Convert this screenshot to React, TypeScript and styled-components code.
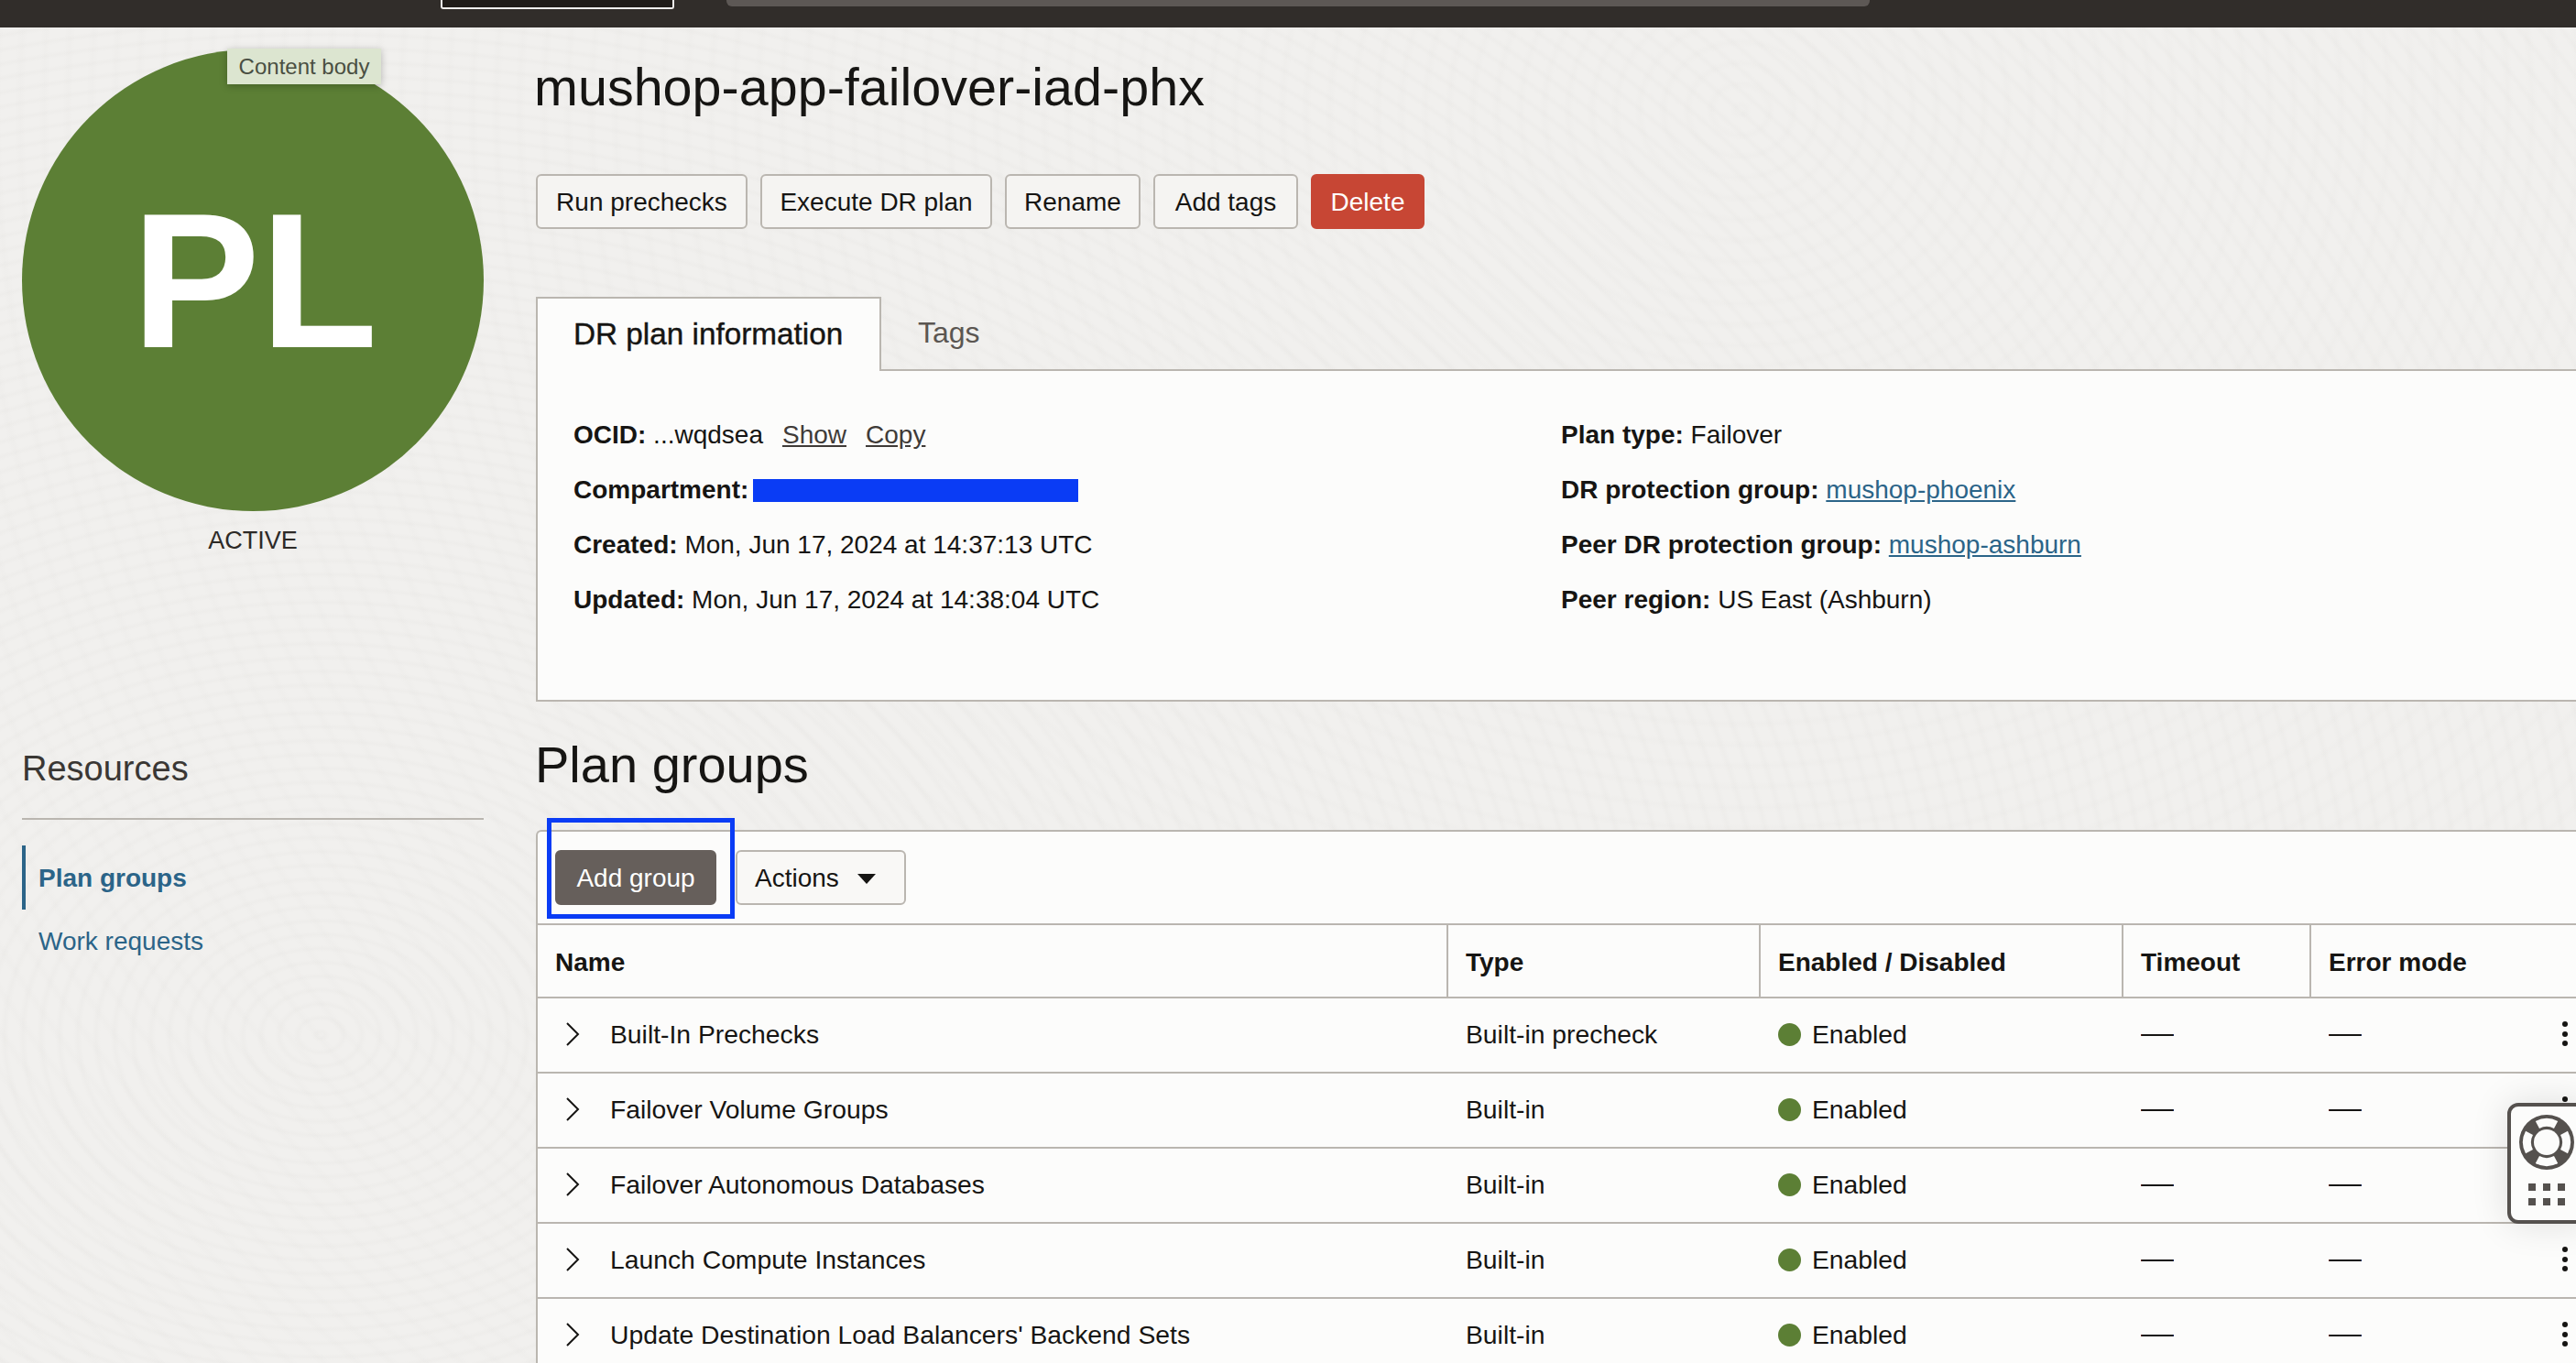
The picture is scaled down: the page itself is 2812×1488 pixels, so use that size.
import styled, { createGlobalStyle } from "styled-components"

const GlobalStyle = createGlobalStyle`
    html, body {
        margin: 0;
        padding: 0;
        width: 2812px;
        height: 1488px;
        overflow: hidden;
        font-family: "Liberation Sans", Arial, sans-serif;
        color: #161513;
    }
    * {
        box-sizing: border-box;
    }
`

const actions = [
    { label: "Run prechecks", width: 231 },
    { label: "Execute DR plan", width: 253 },
    { label: "Rename", width: 148 },
    { label: "Add tags", width: 158 },
]

const leftInfo = [
    { label: "Created:", value: "Mon, Jun 17, 2024 at 14:37:13 UTC" },
    { label: "Updated:", value: "Mon, Jun 17, 2024 at 14:38:04 UTC" },
]

const groups = [
    { name: "Built-In Prechecks", type: "Built-in precheck" },
    { name: "Failover Volume Groups", type: "Built-in" },
    { name: "Failover Autonomous Databases", type: "Built-in" },
    { name: "Launch Compute Instances", type: "Built-in" },
    { name: "Update Destination Load Balancers' Backend Sets", type: "Built-in" },
]

const Chevron = () => (
    <svg width="16" height="28" viewBox="0 0 16 28" fill="none">
        <path d="M2 2 L14 14 L2 26" stroke="#161513" strokeWidth="2" />
    </svg>
)

const Kebab = () => (
    <svg width="8" height="30" viewBox="0 0 8 30">
        <circle cx="4" cy="4" r="3" fill="#161513" />
        <circle cx="4" cy="15" r="3" fill="#161513" />
        <circle cx="4" cy="25" r="3" fill="#161513" />
    </svg>
)

const Lifebuoy = () => (
    <svg width="60" height="60" viewBox="-30 -30 60 60" fill="none">
        <circle r="30" fill="#55514e" />
        <path
            d="M-10.1 -19 A21.5 21.5 0 0 1 10.1 -19 M19 -10.1 A21.5 21.5 0 0 1 19 10.1 M10.1 19 A21.5 21.5 0 0 1 -10.1 19 M-19 10.1 A21.5 21.5 0 0 1 -19 -10.1"
            stroke="#fcfcfb"
            strokeWidth="9"
        />
        <circle r="14" fill="#fcfcfb" />
    </svg>
)

const App = () => {
    return (
        <Page>
            <GlobalStyle />
            <Header>
                <RegionBox />
                <SearchBox />
            </Header>
            <Body>
                <Sidebar>
                    <Badge>
                        PL
                        <Tooltip>Content body</Tooltip>
                    </Badge>
                    <BadgeStatus>ACTIVE</BadgeStatus>
                    <ResourcesTitle>Resources</ResourcesTitle>
                    <NavItem $active>Plan groups</NavItem>
                    <NavItem>Work requests</NavItem>
                </Sidebar>
                <Main>
                    <Title>mushop-app-failover-iad-phx</Title>
                    <ButtonRow>
                        {actions.map((action) => (
                            <Button key={action.label} $width={action.width}>
                                {action.label}
                            </Button>
                        ))}
                        <DangerButton>Delete</DangerButton>
                    </ButtonRow>
                    <TabRow>
                        <ActiveTab>DR plan information</ActiveTab>
                        <Tab>Tags</Tab>
                    </TabRow>
                    <InfoPanel>
                        <div>
                            <InfoRow>
                                <b>OCID:</b> ...wqdsea
                                <PlainLink>Show</PlainLink>
                                <PlainLink>Copy</PlainLink>
                            </InfoRow>
                            <InfoRow>
                                <b>Compartment:</b>
                                <Redaction />
                            </InfoRow>
                            {leftInfo.map((item) => (
                                <InfoRow key={item.label}>
                                    <b>{item.label}</b> {item.value}
                                </InfoRow>
                            ))}
                        </div>
                        <div>
                            <InfoRow>
                                <b>Plan type:</b> Failover
                            </InfoRow>
                            <InfoRow>
                                <b>DR protection group:</b> <BlueLink>mushop-phoenix</BlueLink>
                            </InfoRow>
                            <InfoRow>
                                <b>Peer DR protection group:</b> <BlueLink>mushop-ashburn</BlueLink>
                            </InfoRow>
                            <InfoRow>
                                <b>Peer region:</b> US East (Ashburn)
                            </InfoRow>
                        </div>
                    </InfoPanel>
                    <SectionTitle>Plan groups</SectionTitle>
                    <Toolbar>
                        <PrimaryButton>Add group</PrimaryButton>
                        <ActionsButton>
                            Actions
                            <Caret />
                        </ActionsButton>
                        <Highlight />
                    </Toolbar>
                    <Table>
                        <HeaderRow>
                            <HeaderCell>Name</HeaderCell>
                            <HeaderCell $divider>Type</HeaderCell>
                            <HeaderCell $divider>Enabled / Disabled</HeaderCell>
                            <HeaderCell $divider>Timeout</HeaderCell>
                            <HeaderCell $divider>Error mode</HeaderCell>
                        </HeaderRow>
                        {groups.map((group) => (
                            <Row key={group.name}>
                                <NameCell>
                                    <Chevron />
                                    {group.name}
                                </NameCell>
                                <Cell>{group.type}</Cell>
                                <Cell>
                                    <StatusDot />
                                    Enabled
                                </Cell>
                                <Cell>
                                    <Dash>—</Dash>
                                </Cell>
                                <LastCell>
                                    <Dash>—</Dash>
                                    <Kebab />
                                </LastCell>
                            </Row>
                        ))}
                    </Table>
                </Main>
            </Body>
            <HelpWidget>
                <Lifebuoy />
                <HelpGrid>
                    {[0, 1, 2, 3, 4, 5].map((i) => (
                        <HelpSquare key={i} />
                    ))}
                </HelpGrid>
            </HelpWidget>
        </Page>
    )
}

export default App

const Page = styled.div`
    position: relative;
    width: 2812px;
    height: 1488px;
    overflow: hidden;
    background-color: #f1f0ee;
    background-image:
        repeating-radial-gradient(ellipse 70% 100% at 350px 1130px, transparent 0, rgba(120, 115, 105, 0.022) 5px, transparent 10px, transparent 20px),
        repeating-radial-gradient(ellipse 60% 100% at 1900px 120px, transparent 0, rgba(120, 115, 105, 0.016) 6px, transparent 12px, transparent 26px);
`

const Header = styled.header`
    display: flex;
    align-items: flex-start;
    height: 30px;
    padding-left: 481px;
    gap: 57px;
    background: #312d2a;
`

const RegionBox = styled.div`
    width: 255px;
    height: 10px;
    background: #201c19;
    border: 2px solid #f1efed;
    border-top: none;
    border-radius: 0 0 3px 3px;
`

const SearchBox = styled.div`
    width: 1248px;
    height: 7px;
    background: #5d5855;
    border-radius: 0 0 6px 6px;
`

const Body = styled.div`
    display: flex;
    gap: 57px;
    padding-left: 24px;
`

const Sidebar = styled.aside`
    flex: 0 0 504px;
    padding-top: 24px;
`

const Badge = styled.div`
    position: relative;
    display: flex;
    align-items: center;
    justify-content: center;
    width: 504px;
    height: 504px;
    padding: 2px 0 0 4px;
    border-radius: 50%;
    background: #5c7f35;
    color: #fff;
    font-size: 210px;
    font-weight: 700;
`

const Tooltip = styled.div`
    position: absolute;
    left: 224px;
    top: -1px;
    width: 168px;
    height: 39px;
    display: flex;
    align-items: center;
    justify-content: center;
    background: #dce5d0;
    color: #4a4f42;
    font-size: 24px;
    font-weight: 400;
    box-shadow: 0 2px 8px rgba(0, 0, 0, 0.25);
`

const BadgeStatus = styled.div`
    margin-top: 16px;
    font-size: 27px;
    line-height: 32px;
    text-align: center;
    color: #2d2a27;
`

const ResourcesTitle = styled.h2`
    height: 78px;
    margin: 211px 0 28px;
    border-bottom: 2px solid #bab6b0;
    font-size: 38px;
    line-height: 44px;
    font-weight: 400;
    color: #3a3734;
`

const NavItem = styled.div<{ $active?: boolean }>`
    display: flex;
    align-items: center;
    height: ${(props) => (props.$active ? "70px" : "68px")};
    padding: 2px 0 0 ${(props) => (props.$active ? "14px" : "18px")};
    border-left: ${(props) => (props.$active ? "4px solid #2b6488" : "none")};
    color: #2b6488;
    font-size: 28px;
    font-weight: ${(props) => (props.$active ? 700 : 400)};
`

const Main = styled.main`
    flex: 1;
    min-width: 0;
`

const Title = styled.h1`
    margin: 32px 0 0 -2px;
    font-size: 57.5px;
    line-height: 66px;
    font-weight: 400;
    white-space: nowrap;
`

const ButtonRow = styled.div`
    display: flex;
    gap: 14px;
    margin-top: 62px;
`

const Button = styled.button<{ $width?: number }>`
    width: ${(props) => props.$width}px;
    height: 60px;
    padding: 2px 0 0;
    background: #f5f4f2;
    border: 2px solid #bab6b0;
    border-radius: 6px;
    color: #161513;
    font-family: inherit;
    font-size: 28px;
`

const DangerButton = styled(Button)`
    width: 124px;
    background: #c74634;
    border-color: #c74634;
    color: #fff;
`

const TabRow = styled.div`
    position: relative;
    z-index: 1;
    display: flex;
    margin-top: 74px;
    margin-bottom: -2px;
`

const ActiveTab = styled.div`
    width: 377px;
    height: 81px;
    padding: 20px 0 0 39px;
    background: #fcfcfb;
    border: 2px solid #bab6b0;
    border-bottom: none;
    font-size: 33.3px;
    line-height: 38px;
    -webkit-text-stroke: 0.4px #161513;
`

const Tab = styled.div`
    padding: 20px 0 0 40px;
    color: #5b5652;
    font-size: 32px;
    line-height: 38px;
`

const InfoPanel = styled.section`
    display: grid;
    grid-template-columns: 1078px 1fr;
    height: 363px;
    padding: 40px 0 0 39px;
    background: #fcfcfb;
    border: 2px solid #bab6b0;
    border-right: none;
`

const InfoRow = styled.div`
    height: 60px;
    font-size: 28px;
    line-height: 60px;
    white-space: nowrap;
`

const PlainLink = styled.a`
    margin-left: 21px;
    color: #3f3b38;
    text-decoration: underline;
`

const BlueLink = styled.a`
    color: #2b6488;
    text-decoration: underline;
`

const Redaction = styled.span`
    display: inline-block;
    width: 355px;
    height: 25px;
    margin-left: 5px;
    vertical-align: -4px;
    background: #0a3cf5;
`

const SectionTitle = styled.h2`
    margin: 36px 0 0 -1px;
    font-size: 56px;
    line-height: 66px;
    font-weight: 400;
`

const Toolbar = styled.div`
    position: relative;
    display: flex;
    align-items: center;
    gap: 21px;
    height: 104px;
    margin-top: 38px;
    padding-left: 19px;
    background: #fcfcfb;
    border: 2px solid #bab6b0;
    border-right: none;
    border-radius: 6px 0 0 0;
`

const PrimaryButton = styled(Button)`
    width: 176px;
    background: #665f5b;
    border-color: #665f5b;
    color: #fff;
`

const ActionsButton = styled(Button)`
    display: flex;
    align-items: center;
    gap: 20px;
    width: 186px;
    padding-left: 19px;
    background: #f9f8f6;
`

const Caret = styled.span`
    width: 0;
    height: 0;
    border-left: 10px solid transparent;
    border-right: 10px solid transparent;
    border-top: 11px solid #161513;
`

const Highlight = styled.div`
    position: absolute;
    left: 10px;
    top: -15px;
    width: 205px;
    height: 110px;
    border: 5px solid #0a3cf5;
`

const Table = styled.div`
    background: #fcfcfb;
    border-left: 2px solid #bab6b0;
`

const columns = "992px 341px 396px 205px 1fr"

const HeaderRow = styled.div`
    display: grid;
    grid-template-columns: ${columns};
    height: 80px;
    border-bottom: 2px solid #bab6b0;
`

const HeaderCell = styled.div<{ $divider?: boolean }>`
    display: flex;
    align-items: center;
    padding: 4px 0 0 19px;
    border-left: ${(props) => (props.$divider ? "2px solid #bab6b0" : "none")};
    font-size: 28px;
    font-weight: 700;
`

const Row = styled.div`
    display: grid;
    grid-template-columns: ${columns};
    height: 82px;
    border-bottom: 2px solid #bab6b0;
`

const Cell = styled.div`
    display: flex;
    align-items: center;
    padding: 0 0 2px 21px;
    font-size: 28.3px;
    white-space: nowrap;
`

const NameCell = styled(Cell)`
    gap: 33px;
    padding-left: 30px;
`

const LastCell = styled(Cell)`
    justify-content: space-between;
    padding-right: 8px;
`

const StatusDot = styled.span`
    width: 25px;
    height: 25px;
    margin-right: 12px;
    border-radius: 50%;
    background: #5c7f35;
`

const Dash = styled.span`
    margin-top: -2px;
    font-size: 36px;
    line-height: 36px;
    transform: scaleY(0.8);
`

const HelpWidget = styled.div`
    position: absolute;
    left: 2737px;
    top: 1204px;
    display: flex;
    flex-direction: column;
    align-items: center;
    gap: 15px;
    width: 90px;
    height: 132px;
    padding: 9px 4px 0 0;
    background: #fcfcfb;
    border: 4px solid #55514e;
    border-radius: 12px;
    box-shadow: 0 0 40px rgba(0, 0, 0, 0.12);
`

const HelpGrid = styled.div`
    display: grid;
    grid-template-columns: repeat(3, 8px);
    gap: 8px;
`

const HelpSquare = styled.span`
    width: 8px;
    height: 8px;
    background: #55514e;
`
